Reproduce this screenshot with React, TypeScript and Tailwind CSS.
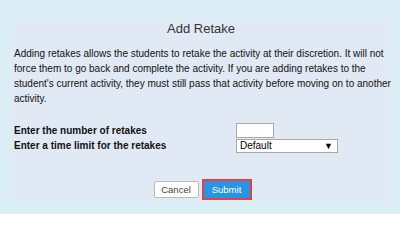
import React from "react";

export default function App() {
  return (
    <div
      className="w-[400px] h-[214px] bg-[#dbeef5] pt-[20px] pl-[13px]"
      style={{ fontFamily: '"Liberation Sans", Arial, sans-serif' }}
    >
      <div className="w-[376px] h-[180px] bg-[#e1eaf4] pt-[1px] px-[1px] flex flex-col">
        <div className="text-center text-[13px] leading-[16px] text-[#333]">Add Retake</div>
        <p className="mt-[9px] text-[10px] leading-[15px] text-[#111] whitespace-nowrap">
          Adding retakes allows the students to retake the activity at their discretion. It will not
          <br />
          force them to go back and complete the activity. If you are adding retakes to the
          <br />
          student's current activity, they must still pass that activity before moving on to another
          <br />
          activity.
        </p>
        <div className="mt-[17px] flex flex-col text-[10px] leading-[15px] font-bold text-[#111]">
          <div className="flex h-[15px]">
            <div className="w-[222px]">Enter the number of retakes</div>
            <div className="w-[38px] h-[15px] bg-white border border-[#a9a9a9]"></div>
          </div>
          <div className="flex h-[15px]">
            <div className="w-[222px]">Enter a time limit for the retakes</div>
            <div className="mt-[1px] w-[102px] h-[14px] bg-white border border-[#a9a9a9] flex items-center justify-between pl-[3px] pr-[4px] font-normal text-[10px] leading-[12px] text-black">
              <span>Default</span>
              <span className="text-[9px]">▼</span>
            </div>
          </div>
        </div>
        <div className="mt-[26px] flex justify-center items-center gap-[3px] pl-[3px]">
          <button className="w-[45px] h-[17px] bg-white border border-[#bbbbbb] rounded-[2px] text-[9.5px] leading-[15px] text-[#444]">
            Cancel
          </button>
          <div className="w-[50px] h-[21px] border-2 border-[#e8413b] flex">
            <button className="flex-1 bg-[#2a94e4] text-white text-[9.5px] leading-[17px]">Submit</button>
          </div>
        </div>
      </div>
    </div>
  );
}
